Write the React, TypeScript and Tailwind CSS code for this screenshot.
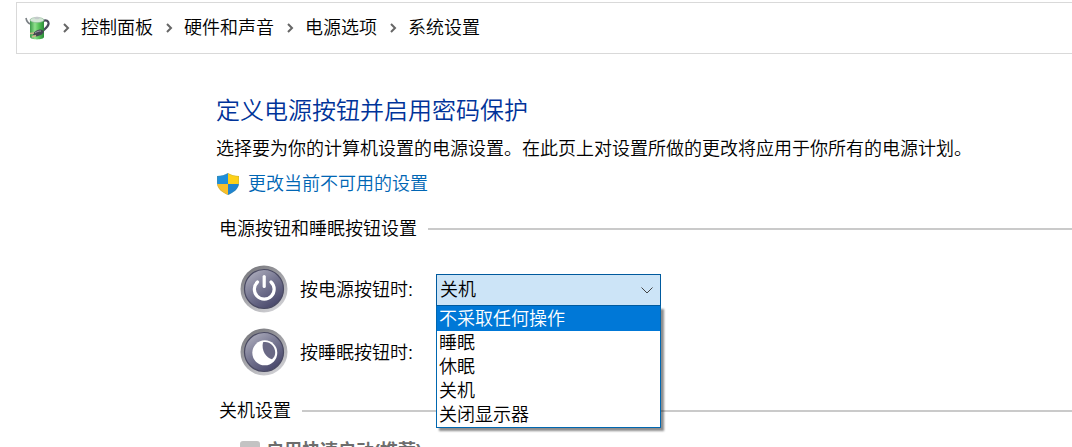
import { Fragment, useState } from "react";

const crumbs = ["控制面板", "硬件和声音", "电源选项", "系统设置"];
const actions = ["不采取任何操作", "睡眠", "休眠", "关机", "关闭显示器"];

function BatteryIcon() {
  return (
    <svg width="25" height="25" viewBox="0 0 25 25" aria-hidden="true">
      <defs>
        <linearGradient id="cell" x1="0" x2="1" y1="0" y2="0">
          <stop offset="0" stopColor="#3a9a48" />
          <stop offset="0.35" stopColor="#8fe08c" />
          <stop offset="0.65" stopColor="#52c055" />
          <stop offset="1" stopColor="#2c8a3a" />
        </linearGradient>
      </defs>
      <path d="M1 2c.5 3 1.500 5 4.500 6" fill="none" stroke="#7b8085" strokeWidth="1.600" />
      <path d="M18 5c3-1.500 6 0 5.500 3-.6 3.500-4 5-7 8" fill="none" stroke="#4a4b5c" strokeWidth="2.200" />
      <path d="M5 3.500v17.500c0 3.200 14 3.200 14 0V3.500z" fill="url(#cell)" />
      <ellipse cx="12" cy="4" rx="7" ry="2.600" fill="#d3e6d5" stroke="#8db596" strokeWidth=".6" />
      <ellipse cx="12" cy="2" rx="2.800" ry="1.300" fill="#c4cbcb" />
      <path d="M8 19c0-3 4-5.500 8-5.500l3 1.500c-.5 3-4 5-8 5.500z" fill="#454652" />
      <path d="M9 17l-4 .5M11 19.500l-4 1.500" stroke="#c9b98a" strokeWidth="1.400" />
      <path d="M10 17c2-1.500 4-2 6-2" stroke="#9b9ca8" fill="none" />
    </svg>
  );
}

function ShieldIcon() {
  return (
    <svg width="24" height="24" viewBox="0 0 24 24" aria-hidden="true">
      <defs>
        <clipPath id="shield">
          <path d="M12 1c3 2 6.500 3 11 3v7c0 5.500-5 9.500-11 12C6 20.500 1 16.500 1 11V4c4.500 0 8-1 11-3z" />
        </clipPath>
      </defs>
      <g clipPath="url(#shield)">
        <path d="M0 0h12v12H0z" fill="#1f8fdb" />
        <path d="M12 0h12v12H12z" fill="#fdd017" />
        <path d="M0 12h12v12H0z" fill="#f7bf2a" />
        <path d="M12 12h12v12H12z" fill="#1f84d0" />
        <path d="M12 1c3 2 6.500 3 11 3v7c0 5.500-5 9.500-11 12C6 20.500 1 16.500 1 11V4c4.500 0 8-1 11-3z" fill="none" stroke="#7a8a60" strokeOpacity=".4" />
      </g>
    </svg>
  );
}

function RoundIcon({ kind }: { kind: "power" | "sleep" }) {
  const ring = `ring-${kind}`;
  const face = `face-${kind}`;
  return (
    <svg width="48" height="48" viewBox="0 0 48 48" className="shrink-0" aria-hidden="true">
      <defs>
        <linearGradient id={ring} x1="0.200" y1="0" x2="0.800" y2="1">
          <stop offset="0" stopColor="#77777c" />
          <stop offset="0.500" stopColor="#a5a5aa" />
          <stop offset="1" stopColor="#d5d5d9" />
        </linearGradient>
        <linearGradient id={face} x1="0.100" y1="0" x2="0.800" y2="1">
          <stop offset="0" stopColor="#b4b4c2" />
          <stop offset="0.450" stopColor="#7a7a94" />
          <stop offset="1" stopColor="#434267" />
        </linearGradient>
      </defs>
      <circle cx="24" cy="24" r="23.500" fill={`url(#${ring})`} />
      <circle cx="24" cy="24" r="19.500" fill={`url(#${face})`} stroke="#4a4a62" strokeWidth="1.200" />
      {kind === "power" ? (
        <g fill="none" stroke="#fff" strokeLinecap="round" strokeWidth="3.200">
          <path d="M17.500 17a9.900 9.900 0 1 0 13.500 0" />
          <path d="M24.200 11.500v10" />
        </g>
      ) : (
        <>
          <circle cx="24.800" cy="24.800" r="12.500" fill="#fff" />
          <path d="M23 14.200c6-1.500 12 3.500 12.200 10 .1 3-1 5.300-3.200 7-5.500-1.500-11-8.500-9-17z" fill="#6a6985" />
        </>
      )}
    </svg>
  );
}

function SectionTitle({ children }: { children: string }) {
  return (
    <div className="flex h-7 items-center gap-[11px] pl-[3px]">
      <h2 className="shrink-0">{children}</h2>
      <div className="h-[2px] flex-1 bg-[#cacaca]" />
    </div>
  );
}

export default function App() {
  const [power, setPower] = useState("关机");
  const [sleep, setSleep] = useState("睡眠");
  const [open, setOpen] = useState(true);

  return (
    <div className="h-screen overflow-hidden bg-white pt-[2px] font-['Liberation_Sans','Noto_Sans_CJK_SC',sans-serif] text-[18px] leading-7 font-[350] text-black">
      <nav aria-label="位置" className="ml-4 flex h-[52px] items-center border border-r-0 border-[#d9d9d9] pl-2">
        <BatteryIcon />
        <ol className="flex items-center">
          {crumbs.map((name) => (
            <Fragment key={name}>
              <li aria-hidden="true" className="flex w-[31px] justify-center">
                <svg width="8" height="10" viewBox="0 0 8 10" fill="none" stroke="#666" strokeWidth="2">
                  <path d="M2 1l4 4-4 4" />
                </svg>
              </li>
              <li>
                <a href="#">{name}</a>
              </li>
            </Fragment>
          ))}
        </ol>
      </nav>

      <main className="pl-[216px]">
        <h1 className="mt-[39px] text-[24px] leading-9 text-[#003399]">定义电源按钮并启用密码保护</h1>
        <p className="mt-[6px]">选择要为你的计算机设置的电源设置。在此页上对设置所做的更改将应用于你所有的电源计划。</p>
        <a href="#" className="mt-[7px] mb-[17px] flex w-fit items-center gap-2 text-[#0066b4]">
          <ShieldIcon />
          更改当前不可用的设置
        </a>

        <SectionTitle>电源按钮和睡眠按钮设置</SectionTitle>
        <div className="mt-[22px] mb-[21px] flex flex-col gap-[15px] pl-6">
          <div className="flex h-12 items-center">
            <RoundIcon kind="power" />
            <div className="flex flex-1 items-center pt-[2px] pl-3">
              <label htmlFor="power" className="w-[136px]">按电源按钮时:</label>
              <div className="relative w-[225px]">
                <select
                  id="power"
                  value={power}
                  onChange={(e) => setPower(e.target.value)}
                  className="block h-8 w-full appearance-none border border-[#005a9e] bg-[#cce4f7] pl-[3px]"
                >
                  {actions.map((a) => (
                    <option key={a}>{a}</option>
                  ))}
                </select>
                <svg width="12" height="7" viewBox="0 0 12 7" fill="none" stroke="#444" className="pointer-events-none absolute top-[13px] right-2">
                  <path d="M.5 .5L6 6l5.500-5.500" />
                </svg>
                {open && (
                  <ul
                    role="listbox"
                    aria-label="按电源按钮时"
                    className="absolute top-full left-0 z-10 w-full border border-t-0 border-[#0067b0] bg-white leading-6 shadow-[3px_3px_2px_rgba(0,0,0,0.45)]"
                  >
                    {actions.map((a, i) => (
                      <li
                        key={a}
                        role="option"
                        aria-selected={i === 0}
                        onClick={() => {
                          setPower(a);
                          setOpen(false);
                        }}
                        className={i === 0 ? "bg-[#0078d7] pt-px pl-[2px] text-white" : "pl-[2px]"}
                      >
                        {a}
                      </li>
                    ))}
                  </ul>
                )}
              </div>
            </div>
          </div>
          <div className="flex h-12 items-center">
            <RoundIcon kind="sleep" />
            <div className="flex flex-1 items-center pt-[2px] pl-3">
              <label htmlFor="sleep" className="w-[136px]">按睡眠按钮时:</label>
              <select
                id="sleep"
                value={sleep}
                onChange={(e) => setSleep(e.target.value)}
                className="h-8 w-[225px] appearance-none border border-[#adadad] bg-white pl-[3px]"
              >
                {actions.map((a) => (
                  <option key={a}>{a}</option>
                ))}
              </select>
            </div>
          </div>
        </div>

        <SectionTitle>关机设置</SectionTitle>
        <div className="mt-3 flex items-center gap-[6px] pl-6 font-bold text-[#6d6d6d]">
          <input id="fast" type="checkbox" disabled className="size-5 appearance-none rounded-[3px] bg-[#c3c3c3]" />
          <label htmlFor="fast">启用快速启动(推荐)</label>
        </div>
      </main>
    </div>
  );
}
